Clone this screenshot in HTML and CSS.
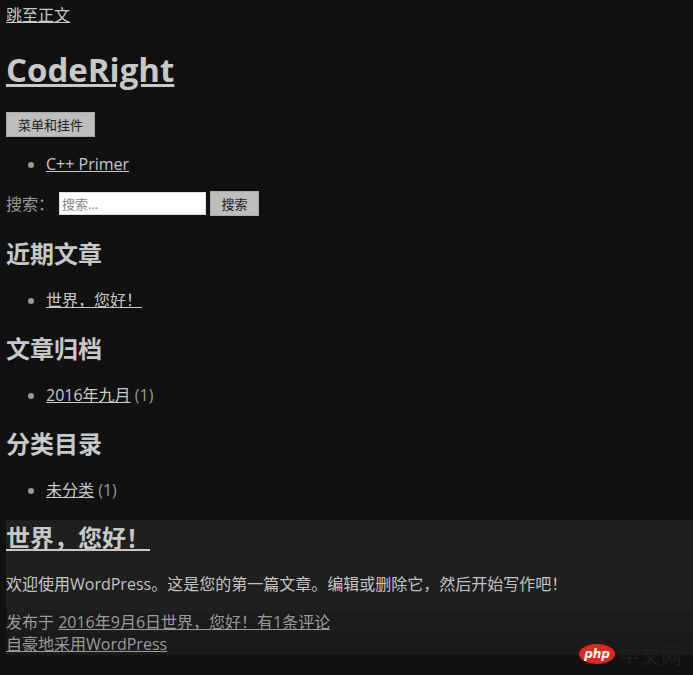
FILE: index.html
```html
<!DOCTYPE html>
<html lang="zh-CN">
<head>
    <meta charset="UTF-8" />
    <meta name="viewport" content="width=device-width, initial-scale=1" />
    <title>CodeRight</title>
    <link rel="stylesheet" href="styles.css">
</head>
<body>
    <a class="skip-link" href="#content">跳至正文</a>

    <header class="site-header">
        <h1 class="site-title"><a href="#">CodeRight</a></h1>
        <button class="menu-toggle">菜单和挂件</button>
    </header>

    <div class="sidebar">
        <ul class="widget-list nav-menu">
            <li><a href="#">C++ Primer</a></li>
        </ul>

        <form class="search-form">
            <label for="s">搜索：</label>
            <input type="search" id="s" placeholder="搜索…" />
            <button type="button" class="search-submit">搜索</button>
        </form>

        <section class="widget">
            <h2 class="widget-title">近期文章</h2>
            <ul class="widget-list">
                <li><a href="#">世界，您好！</a></li>
            </ul>
        </section>

        <section class="widget">
            <h2 class="widget-title">文章归档</h2>
            <ul class="widget-list">
                <li><a href="#">2016年九月</a>&nbsp;(1)</li>
            </ul>
        </section>

        <section class="widget">
            <h2 class="widget-title">分类目录</h2>
            <ul class="widget-list">
                <li><a href="#">未分类</a> (1)</li>
            </ul>
        </section>
    </div>

    <article class="post" id="content">
        <h1 class="entry-title"><a href="#">世界，您好！</a></h1>
        <div class="entry-content">
            <p>欢迎使用WordPress。这是您的第一篇文章。编辑或删除它，然后开始写作吧！</p>
        </div>
        <footer class="entry-footer">
            发布于 <a href="#">2016年9月6日</a><a href="#">世界，您好！有1条评论</a>
        </footer>
    </article>

    <footer class="site-footer">
        <a href="#">自豪地采用WordPress</a>
    </footer>

    <div class="watermark">
        <svg width="38" height="22" viewBox="0 0 38 22">
            <ellipse cx="19" cy="11" rx="18" ry="10" fill="#e3261d"/>
            <text x="19" y="15" text-anchor="middle" font-family="'DejaVu Sans', sans-serif" font-size="12" font-style="italic" font-weight="bold" fill="#fff">php</text>
        </svg>
        <span>中文网</span>
    </div>
</body>
</html>
```

FILE: styles.css
```css
* {
    box-sizing: border-box;
}
body {
    margin: 4px 0 0 6px;
    background: #111111;
    color: #999999;
    font-family: 'Open Sans', 'Noto Sans CJK SC', sans-serif;
    font-size: 16px;
    line-height: 22px;
}
a {
    color: #c8c8c8;
}
.skip-link {
    display: inline-block;
}
.site-title {
    margin: 24px 0 0;
    font-size: 33px;
    line-height: 40px;
    font-weight: bold;
}
.menu-toggle {
    display: block;
    margin-top: 22px;
    height: 25px;
    padding: 0 11px;
    background: #bdbdbd;
    color: #222222;
    border: 1px solid #aaaaaa;
    font-family: 'Open Sans', 'Noto Sans CJK SC', sans-serif;
    font-size: 13px;
}
.widget-list {
    margin: 0;
    padding-left: 40px;
}
.widget-list li::marker {
    color: #999999;
}
.nav-menu {
    margin-top: 16px;
}
.search-form {
    display: flex;
    align-items: center;
    margin-top: 16px;
    height: 25px;
}
.search-form label {
    margin-right: 5px;
}
.search-form input {
    width: 147px;
    height: 23px;
    padding: 0 2px;
    border: 1px solid #dddddd;
    background: #ffffff;
    font-family: 'Open Sans', 'Noto Sans CJK SC', sans-serif;
    font-size: 13px;
}
.search-form input::placeholder {
    color: #888888;
}
.search-submit {
    margin-left: 4px;
    width: 49px;
    height: 25px;
    background: #bdbdbd;
    color: #222222;
    border: 1px solid #aaaaaa;
    font-family: 'Open Sans', 'Noto Sans CJK SC', sans-serif;
    font-size: 13px;
}
.widget-title {
    margin: 23px 0 20px;
    color: #c8c8c8;
    font-size: 24px;
    line-height: 30px;
}
.post {
    margin-top: 19px;
    background: #1f1f1f;
}
.entry-title {
    margin: 0;
    padding-top: 3px;
    font-size: 24px;
    line-height: 30px;
}
.entry-content p {
    margin: 0;
    padding: 20px 0 16px;
    color: #c4c4c4;
}
.entry-footer {
    background: #1c1c1c;
    line-height: 22px;
}
.entry-footer a,
.site-footer a {
    color: #9a9a9a;
}
.site-footer {
    background: #1a1a1a;
    line-height: 22px;
}
.watermark {
    position: absolute;
    right: 11px;
    bottom: 9px;
    display: flex;
    align-items: center;
    gap: 3px;
    font-family: 'Noto Sans CJK SC', sans-serif;
    font-size: 21px;
    line-height: 24px;
    color: #1e1e1e;
}
```
